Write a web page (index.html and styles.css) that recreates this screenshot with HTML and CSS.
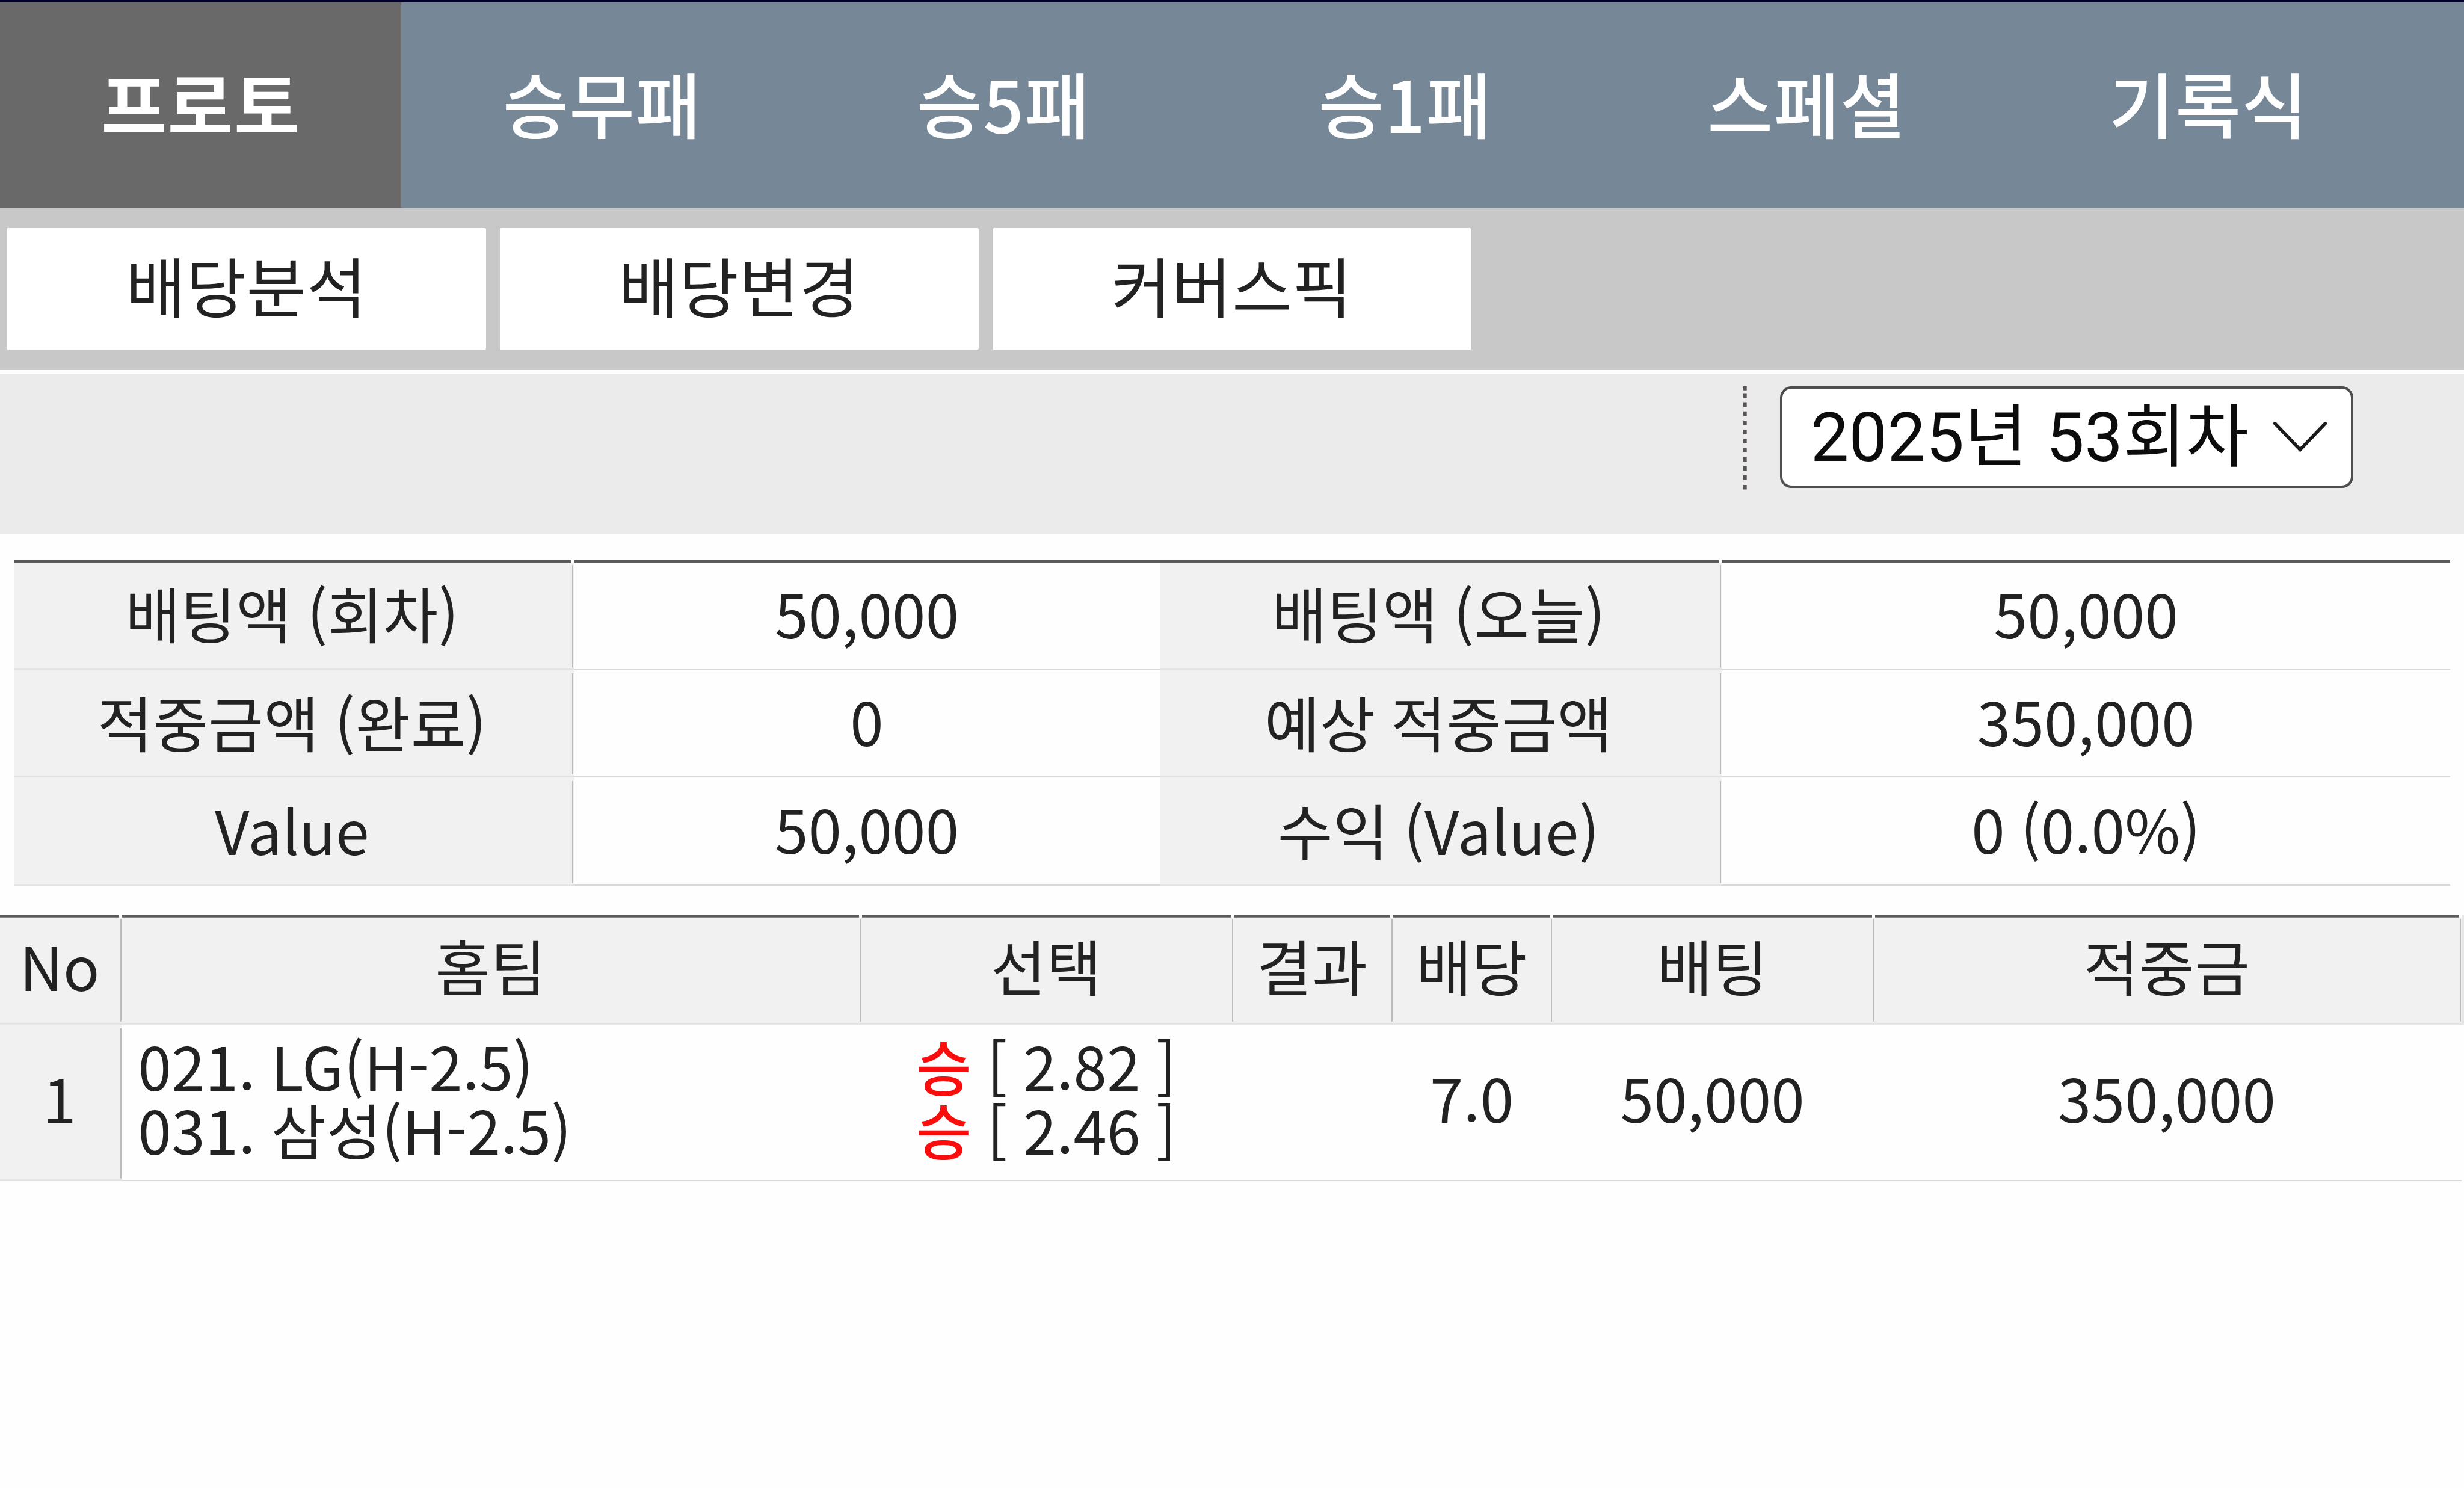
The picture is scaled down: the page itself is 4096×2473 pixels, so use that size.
FILE: index.html
```html
<!DOCTYPE html>
<html lang="ko">
<head>
<meta charset="utf-8">
<title>프로토</title>
<link rel="stylesheet" href="styles.css">
</head>
<body>
<nav class="tabs">
  <a class="tab active">프로토</a>
  <a class="tab">승무패</a>
  <a class="tab">승5패</a>
  <a class="tab">승1패</a>
  <a class="tab">스페셜</a>
  <a class="tab">기록식</a>
</nav>
<div class="subnav">
  <a class="sub">배당분석</a>
  <a class="sub">배당변경</a>
  <a class="sub">커버스픽</a>
</div>
<div class="filter">
  <svg class="dots" viewBox="0 0 6 181"><path d="M3 0v7M3 12v8M3 28v8M3 44v8M3 60v8M3 76v8M3 92v8M3 108v8M3 124v8M3 140v8M3 156v8M3 173v8"/></svg>
  <div class="select">
    <span class="select-text">2025년 53회차</span>
    <svg class="chevron" viewBox="0 0 94 54"><path d="M3 3L47 49L91 3"/></svg>
  </div>
</div>
<section class="summary">
  <div class="th first">배팅액 (회차)</div><div class="td first">50,000</div><div class="th first">배팅액 (오늘)</div><div class="td first">50,000</div>
  <div class="th">적중금액 (완료)</div><div class="td">0</div><div class="th">예상 적중금액</div><div class="td">350,000</div>
  <div class="th">Value</div><div class="td">50,000</div><div class="th">수익 (Value)</div><div class="td">0 (0.0%)</div>
</section>
<section class="bets">
  <div class="row head">
    <div class="th first">No</div><div class="th first">홈팀</div><div class="th first">선택</div><div class="th first">결과</div><div class="th first">배당</div><div class="th first">배팅</div><div class="th first">적중금</div><div class="edge"></div>
  </div>
  <div class="row body">
    <div class="th">1</div>
    <div class="td teams"><span>021. LG(H-2.5)</span><span>031. 삼성(H-2.5)</span></div>
    <div class="td picks"><span><b class="win">승</b> [ 2.82 ]</span><span><b class="win">승</b> [ 2.46 ]</span></div>
    <div class="td"></div>
    <div class="td">7.0</div>
    <div class="td">50,000</div>
    <div class="td">350,000</div>
  </div>
</section>
</body>
</html>
```

FILE: styles.css
```css
/* 1rem = 100 layout units */
html {
  font-size: 94.8148px;
}

* {
  box-sizing: border-box;
}

body {
  margin: 0;
  background: #fefefe;
  color: #222;
  font-family: "Noto Sans CJK KR", sans-serif;
  overflow: hidden;
  white-space: nowrap;
}

.tabs {
  display: flex;
  height: 3.64rem;
  border-top: 0.05rem solid #02002a;
  background: #768797;
}

.tab {
  width: 7.04rem;
  padding-bottom: 0.11rem;
  display: flex;
  align-items: center;
  justify-content: center;
  color: #fff;
  font-size: 1.25rem;
  font-weight: 500;
  letter-spacing: 0.014rem;
}

.tab.active {
  background: #696969;
  font-weight: 700;
}

.subnav {
  display: flex;
  gap: 0.24rem;
  height: 2.85rem;
  padding: 0.36rem 0.12rem;
  background: #c8c8c8;
}

.sub {
  width: 8.4rem;
  height: 2.125rem;
  padding-bottom: 0.16rem;
  display: flex;
  align-items: center;
  justify-content: center;
  background: #fff;
  border-radius: 0.03rem;
  font-size: 1.14rem;
  letter-spacing: 0.008rem;
}

.filter {
  display: flex;
  justify-content: flex-end;
  height: 2.875rem;
  border-top: 0.075rem solid #fff;
  padding: 0.21rem 1.94rem 0 0;
  background: #ebebeb;
}

.dots {
  width: 0.06rem;
  height: 1.81rem;
  margin-right: 0.585rem;
  stroke: #5a5458;
  stroke-width: 6;
}

.select {
  display: flex;
  align-items: center;
  justify-content: space-between;
  width: 10.05rem;
  height: 1.78rem;
  border: 0.05rem solid #4e4e4e;
  border-radius: 0.2rem;
  padding: 0 0.42rem 0 0.49rem;
  background: #fff;
  color: #0c0c0c;
}

.select-text {
  padding-bottom: 0.2rem;
  font-family: Roboto, "Noto Sans CJK KR", sans-serif;
  font-size: 1.195rem;
  letter-spacing: 0.003rem;
  word-spacing: 0.03rem;
}

.chevron {
  width: 0.94rem;
  height: 0.54rem;
  fill: none;
  stroke: #1a1a1a;
  stroke-width: 6;
  stroke-linecap: round;
}

.th,
.td {
  display: flex;
  align-items: center;
  justify-content: center;
  font-size: 1.053rem;
  letter-spacing: 0.003rem;
  word-spacing: -0.025rem;
}

.summary {
  display: grid;
  grid-template-columns: 9.82rem 10.26rem 9.86rem 12.77rem;
  grid-template-rows: 1.925rem 1.885rem 1.9rem;
  margin: 0.455rem 0.25rem 0;
}

.summary > div {
  padding-bottom: 0.12rem;
}

.summary > .th {
  padding-right: 0.08rem;
  padding-bottom: 0.1rem;
}

.summary .td {
  border-bottom: 0.03rem solid #d8d8dd;
}

.th {
  background:
    linear-gradient(#babbbd, #babbbd) right 0.01rem top 0.06rem / 0.025rem calc(100% - 0.11rem) no-repeat,
    linear-gradient(#e4e4e6, #e4e4e6) left bottom / 100% 0.03rem no-repeat,
    #f1f1f1;
}

.th.first {
  background:
    linear-gradient(#5c5a5b, #5c5a5b) left top / calc(100% - 0.05rem) 0.05rem no-repeat,
    linear-gradient(#fff, #fff) left top / 100% 0.05rem no-repeat,
    linear-gradient(#babbbd, #babbbd) right 0.01rem top 0.08rem / 0.025rem calc(100% - 0.13rem) no-repeat,
    linear-gradient(#e4e4e6, #e4e4e6) left bottom / 100% 0.03rem no-repeat,
    #f1f1f1;
}

.td.first {
  border-top: 0.05rem solid #5c5a5b;
}

.bets {
  margin-top: 0.5rem;
}

.row {
  display: grid;
  grid-template-columns: 2.14rem 12.97rem 6.52rem 2.8rem 2.8rem 5.64rem 10.29rem 1fr;
}

.row > div {
  padding-right: 0.05rem;
  padding-bottom: 0.19rem;
}

.head > div {
  padding-bottom: 0.17rem;
}

.head {
  height: 1.93rem;
}

.body {
  height: 2.745rem;
}

.body .td {
  border-bottom: 0.03rem solid #d8d8dd;
}

.edge {
  background: #e6e6e6;
}

.row > .teams,
.row > .picks {
  flex-direction: column;
  padding-bottom: 0.18rem;
  line-height: 1.125rem;
}

.row > .teams {
  align-items: flex-start;
  padding-left: 0.28rem;
}

.win {
  color: #fb0d0d;
  font-weight: 500;
}
```
